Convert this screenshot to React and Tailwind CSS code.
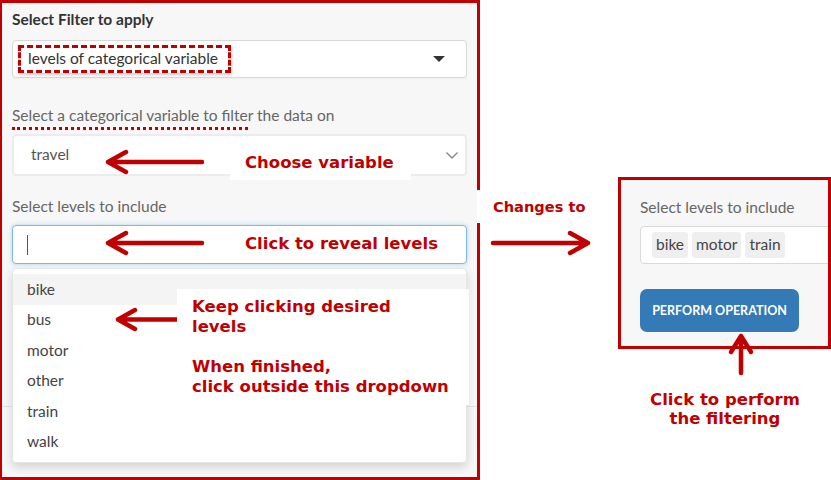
import React from 'react';

const RED = '#c00000';
const NOTE_FONT = { fontFamily: '"DejaVu Sans", Verdana, sans-serif' };

function ArrowLeft({ className }) {
  return (
    <svg className={className} width="100" height="26" viewBox="0 0 100 26" fill="none">
      <path d="M98 13H4M22 3L4 13l18 10" stroke={RED} strokeWidth="4.5" strokeLinecap="round" strokeLinejoin="round" />
    </svg>
  );
}

function Note({ children, className = '' }) {
  return (
    <div className={`absolute bg-white font-bold leading-5 text-[#c00000] ${className}`} style={NOTE_FONT}>
      {children}
    </div>
  );
}

const levels = ['bike', 'bus', 'motor', 'other', 'train', 'walk'];

export default function App() {
  return (
    <div
      className="relative h-[480px] w-[831px] overflow-hidden bg-white text-[15.5px] text-[#333]"
      style={{ fontFamily: 'Lato, "Open Sans", sans-serif' }}
    >
      <div className="flex items-start gap-[138px]">
        {/* left panel */}
        <div className="h-[480px] w-[480px] border-[3px] border-l-2 border-[#c00000] bg-[#f7f7f7] px-[10px] pt-[6px]">
          <div className="font-bold leading-5 text-[#333]">Select Filter to apply</div>
          <div className="mt-[11px] flex h-[38px] items-center justify-between rounded border border-[#d9d9d9] bg-white pl-[15px] pr-[21px] shadow-[0_1px_2px_rgba(0,0,0,0.04)]">
            <span>levels of categorical variable</span>
            <span className="h-0 w-0 border-x-[6px] border-t-[6px] border-x-transparent border-t-[#333]" />
          </div>

          <div className="mt-[27px] leading-5 text-[#666]">Select a categorical variable to filter the data on</div>
          <div className="mt-[9px] flex h-[42px] items-center justify-between rounded border-2 border-[#ececec] bg-white pl-[17px] pr-[6px]">
            <span className="text-[#555]">travel</span>
            <svg width="14" height="9" viewBox="0 0 14 9" fill="none">
              <path d="M1.5 1.5l5.5 5.5 5.5-5.5" stroke="#888" strokeWidth="1.4" />
            </svg>
          </div>

          <div className="mt-[20px] leading-5 text-[#666]">Select levels to include</div>
          <div className="relative mt-[9px]">
            <div className="flex h-[39px] items-center rounded border border-[#7fb8e6] bg-white pl-[14px] shadow-[0_0_4px_rgba(102,175,233,0.5)]">
              <span className="h-[20px] w-px bg-[#555]" />
            </div>
            <div className="absolute left-0 right-0 top-[43px] z-10 rounded border border-[#e6e6e6] bg-white pb-[5px] pt-[5px] shadow-[0_4px_10px_rgba(0,0,0,0.15)]">
              {levels.map((l, i) => (
                <div key={l} className={`flex h-[30.5px] items-center pl-[14px] text-[#444] ${i === 0 ? 'bg-[#f4f4f4]' : ''}`}>
                  {l}
                </div>
              ))}
            </div>
          </div>
          <div className="-mx-[10px] mt-[142px] border-t border-[#e3e3e3]" />
        </div>

        {/* right panel */}
        <div className="mt-[177px] h-[172px] w-[213px] overflow-hidden border-[3px] border-[#c00000] bg-[#f7f7f7] pl-[19px] pt-[17px]">
          <div className="leading-5 text-[#666]">Select levels to include</div>
          <div className="mt-[9px] flex h-[38px] w-[260px] items-center gap-[4px] rounded border border-[#d9d9d9] bg-white pl-[11px]">
            {['bike', 'motor', 'train'].map((c) => (
              <span key={c} className="flex h-[26px] items-center rounded-[3px] bg-[#efefef] px-[4px] text-[#444]">
                {c}
              </span>
            ))}
          </div>
          <button
            type="button"
            className="mt-[25px] flex h-[43px] w-[159px] items-center justify-center rounded-[7px] bg-[#337ab7] pt-px text-[12.5px] font-bold text-white"
          >
            PERFORM OPERATION
          </button>
        </div>
      </div>

      {/* annotations */}
      <div className="absolute left-[18px] top-[45px] h-[28px] w-[213px] border-[3px] border-dashed border-[#c00000] shadow-[1px_2px_3px_rgba(0,0,0,0.2)]" />
      <div className="absolute left-[12px] top-[127px] w-[236px] border-t-[3px] border-dotted border-[#c00000]" />

      <ArrowLeft className="absolute left-[104px] top-[149px]" />
      <Note className="left-[230px] top-[149px] h-[31px] w-[181px] pl-[15px] pt-[4px] text-[16.5px]">Choose variable</Note>

      <ArrowLeft className="absolute left-[104px] top-[230px]" />
      <div className="absolute left-[245px] top-[234px] text-[16.5px] font-bold leading-5 text-[#c00000]" style={NOTE_FONT}>
        Click to reveal levels
      </div>

      <svg className="absolute left-[113px] top-[307px] z-20" width="66" height="26" viewBox="0 0 66 26" fill="none">
        <path d="M66 12.5H5M22 3L5 12.5 22 22" stroke={RED} strokeWidth="4.5" strokeLinecap="round" strokeLinejoin="round" />
      </svg>
      <Note className="left-[177px] top-[289px] z-20 h-[116px] w-[292px] pl-[15px] pt-[8px] text-[16.5px]">
        <div>Keep clicking desired</div>
        <div>levels</div>
        <div className="mt-5">When finished,</div>
        <div>click outside this dropdown</div>
      </Note>

      <Note className="left-[477px] top-[190px] h-[33px] w-[118px] pl-[16px] pt-[7px] text-[14.6px]">Changes to</Note>
      <svg className="absolute left-[490px] top-[230px]" width="104" height="26" viewBox="0 0 104 26" fill="none">
        <path d="M3 13h95M80 3l18 10-18 10" stroke={RED} strokeWidth="4.5" strokeLinecap="round" strokeLinejoin="round" />
      </svg>

      <svg className="absolute left-[727px] top-[332px]" width="28" height="44" viewBox="0 0 28 44" fill="none">
        <path d="M14 41V4M4 20L14 4l10 16" stroke={RED} strokeWidth="4.5" strokeLinecap="round" strokeLinejoin="round" />
      </svg>
      <div
        className="absolute left-[625px] top-[390px] w-[200px] text-center text-[16.5px] font-bold leading-[19px] text-[#c00000]"
        style={NOTE_FONT}
      >
        <div>Click to perform</div>
        <div>the filtering</div>
      </div>
    </div>
  );
}
